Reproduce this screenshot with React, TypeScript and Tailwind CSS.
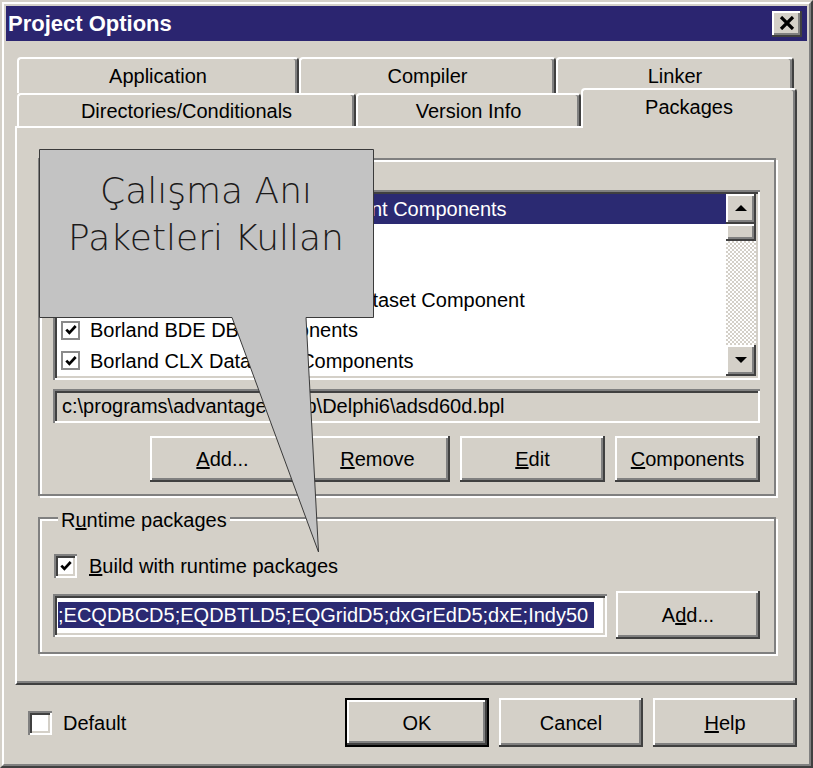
import React from 'react';

const RAISED =
  'bg-[#d4d0c8] shadow-[inset_-2px_-2px_0_#404040,inset_2px_2px_0_#ffffff,inset_-4px_-4px_0_#808080]';
const SUNKEN =
  'shadow-[inset_2px_2px_0_#808080,inset_-2px_-2px_0_#ffffff,inset_4px_4px_0_#404040,inset_-4px_-4px_0_#d4d0c8]';
const ETCHED = 'border-2 border-[#808080] shadow-[inset_2px_2px_0_#ffffff,2px_2px_0_#ffffff]';
const TAB =
  'bg-[#d4d0c8] border-t-2 border-l-2 border-t-white border-l-white border-r-2 border-r-[#404040] rounded-t-[4px] shadow-[inset_-2px_0_0_#808080] flex items-center justify-center';

const ROWS = [
  'Advantage TDataSet Descendant Components',
  'Borland ADO DB Components',
  'Borland Sample Components',
  'Advantage Database Server Dataset Component',
  'Borland BDE DB Components',
  'Borland CLX Database Components',
];

function Check() {
  return (
    <svg width="14" height="14" viewBox="0 0 14 14">
      <path d="M2.3 6.6l3.1 3.2 6.3-6.8" fill="none" stroke="#000" strokeWidth="2.7" />
    </svg>
  );
}

function Arrow({ down }: { down?: boolean }) {
  return (
    <svg width="14" height="8" viewBox="0 0 14 8">
      <polygon points={down ? '1,1 13,1 7,7' : '1,7 13,7 7,1'} fill="#000" />
    </svg>
  );
}

function Btn({ children, w, h, def }: { children: React.ReactNode; w: string; h: string; def?: boolean }) {
  if (def) {
    return (
      <div className={`${w} ${h} border-2 border-black`}>
        <div className={`w-full h-full ${RAISED} flex items-center justify-center`}>{children}</div>
      </div>
    );
  }
  return <div className={`${w} ${h} ${RAISED} flex items-center justify-center`}>{children}</div>;
}

export default function App() {
  return (
    <div className="relative w-[813px] h-[768px] bg-[#d4d0c8] [font-family:'Liberation_Sans',Arial,sans-serif] text-black text-[20px] overflow-hidden">
      <div className="h-full border-2 border-t-[#d4d0c8] border-l-[#d4d0c8] border-r-[#404040] border-b-[#404040]">
        <div className="h-full border-2 border-t-white border-l-white border-r-[#808080] border-b-[#808080] p-[2px] flex flex-col">
          {/* Title bar */}
          <div className="h-[35px] bg-[#2b2570] flex items-center justify-between pl-[2px] pr-[5px]">
            <span className="text-white font-bold text-[22px]">Project Options</span>
            <div className={`w-[30px] h-[26px] ${RAISED} flex items-center justify-center pb-[2px] pr-[1px]`}>
              <svg width="16" height="14" viewBox="0 0 16 14">
                <path d="M2 1l12 12M14 1L2 13" stroke="#000" strokeWidth="3.2" />
              </svg>
            </div>
          </div>

          {/* Tabs */}
          <div className="mt-[16px] ml-[9px] w-[782px]">
            <div className="flex h-[36px] pl-[2px]">
              <div className={`${TAB} w-[282px]`}>Application</div>
              <div className={`${TAB} w-[257px]`}>Compiler</div>
              <div className={`${TAB} w-[238px]`}>Linker</div>
            </div>
            <div className="flex h-[33px] pl-[2px]">
              <div className={`${TAB} w-[339px]`}>Directories/Conditionals</div>
              <div className={`${TAB} w-[225px]`}>Version Info</div>
              <div className={`${TAB} relative z-10 w-[216px] h-[40px] -mt-[5px] self-start pb-[4px]`}>Packages</div>
            </div>

            {/* Panel */}
            <div className="h-[559px] border-2 border-t-white border-l-white border-r-[#404040] border-b-[#404040] shadow-[inset_-2px_-2px_0_#808080] pt-[30px] pl-[21px] pr-[19px] flex flex-col">
              {/* Design packages */}
              <div className={`relative h-[338px] ${ETCHED}`}>
                <span className="absolute -top-[11px] left-[18px] px-[3px] bg-[#d4d0c8] leading-[24px]">Design packages</span>
                <div className={`ml-[13px] mt-[30px] w-[707px] h-[190px] bg-white ${SUNKEN} p-[4px] flex`}>
                  <div className="flex-1 flex flex-col">
                    {ROWS.map((r, i) => (
                      <div
                        key={r}
                        className={`h-[30.5px] flex items-center whitespace-nowrap overflow-hidden ${i === 0 ? 'bg-[#2b2a72] text-white' : ''}`}
                      >
                        <span className="ml-[4px] w-[19px] h-[19px] border-2 border-[#8a8a8a] bg-white flex items-center justify-center shrink-0">
                          <Check />
                        </span>
                        <span className="ml-[10px]">{r}</span>
                      </div>
                    ))}
                  </div>
                  <div className="w-[30px] flex flex-col">
                    <div className={`h-[30px] ${RAISED} flex items-center justify-center pb-[2px]`}>
                      <Arrow />
                    </div>
                    <div className={`h-[17px] ${RAISED}`} />
                    <div className="flex-1 [background-image:repeating-conic-gradient(#d4d0c8_0_25%,#ffffff_0_50%)] [background-size:4px_4px]" />
                    <div className={`h-[31px] ${RAISED} flex items-center justify-center pb-[2px]`}>
                      <Arrow down />
                    </div>
                  </div>
                </div>
                <div className={`ml-[13px] mt-[9px] w-[707px] h-[34px] ${SUNKEN} pl-[9px] flex items-center whitespace-nowrap`}>
                  c:\programs\advantage\temp\Delphi6\adsd60d.bpl
                </div>
                <div className="ml-[13px] mt-[13px] w-[707px] flex justify-end gap-[10px]">
                  <Btn w="w-[145px]" h="h-[46px]">
                    <span><u>A</u>dd...</span>
                  </Btn>
                  <Btn w="w-[145px]" h="h-[46px]">
                    <span><u>R</u>emove</span>
                  </Btn>
                  <Btn w="w-[145px]" h="h-[46px]">
                    <span><u>E</u>dit</span>
                  </Btn>
                  <Btn w="w-[145px]" h="h-[46px]">
                    <span><u>C</u>omponents</span>
                  </Btn>
                </div>
              </div>

              {/* Runtime packages */}
              <div className={`relative mt-[21px] h-[137px] ${ETCHED}`}>
                <span className="absolute -top-[11px] left-[18px] px-[3px] bg-[#d4d0c8] leading-[24px]">
                  R<u>u</u>ntime packages
                </span>
                <div className="ml-[14px] mt-[32px] flex items-center">
                  <span className={`w-[23px] h-[24px] bg-white ${SUNKEN} flex items-center justify-center`}>
                    <Check />
                  </span>
                  <span className="ml-[12px]">
                    <u>B</u>uild with runtime packages
                  </span>
                </div>
                <div className="ml-[13px] mt-[10px] flex items-center gap-[9px]">
                  <div className={`w-[554px] h-[43px] bg-white ${SUNKEN} px-[5px] flex items-center overflow-hidden whitespace-nowrap`}>
                    <span className="bg-[#2b2a72] text-white leading-[26px] pr-[6px]">
                      ;ECQDBCD5;EQDBTLD5;EQGridD5;dxGrEdD5;dxE;Indy50
                    </span>
                  </div>
                  <Btn w="w-[144px]" h="h-[48px]">
                    <span>A<u>d</u>d...</span>
                  </Btn>
                </div>
              </div>
            </div>
          </div>

          {/* Bottom row */}
          <div className="mt-[13px] h-[49px] pl-[22px] pr-[10px] flex items-center">
            <span className={`w-[24px] h-[24px] bg-white ${SUNKEN}`} />
            <span className="ml-[11px]">Default</span>
            <div className="flex-1" />
            <div className="flex gap-[10px]">
              <Btn w="w-[144px]" h="h-[49px]" def>
                OK
              </Btn>
              <Btn w="w-[144px]" h="h-[49px]">
                Cancel
              </Btn>
              <Btn w="w-[144px]" h="h-[49px]">
                <span><u>H</u>elp</span>
              </Btn>
            </div>
          </div>
        </div>
      </div>

      {/* Callout overlay */}
      <svg className="absolute inset-0 pointer-events-none" width="813" height="768" viewBox="0 0 813 768">
        <path
          d="M39.5 149.5H373.5V317.5H306L318.5 552L232 317.5H39.5Z"
          fill="#c3c3c3"
          stroke="#3a3a3a"
          strokeWidth="1"
        />
      </svg>
      <div className="absolute left-[39px] top-[149px] w-[334px] pt-[18px] flex flex-col items-center text-[36px] leading-[47px] text-[#1c1a1a] font-extralight [font-family:'DejaVu_Sans',sans-serif] whitespace-nowrap">
        <span>Çalışma Anı</span>
        <span>Paketleri Kullan</span>
      </div>
    </div>
  );
}
